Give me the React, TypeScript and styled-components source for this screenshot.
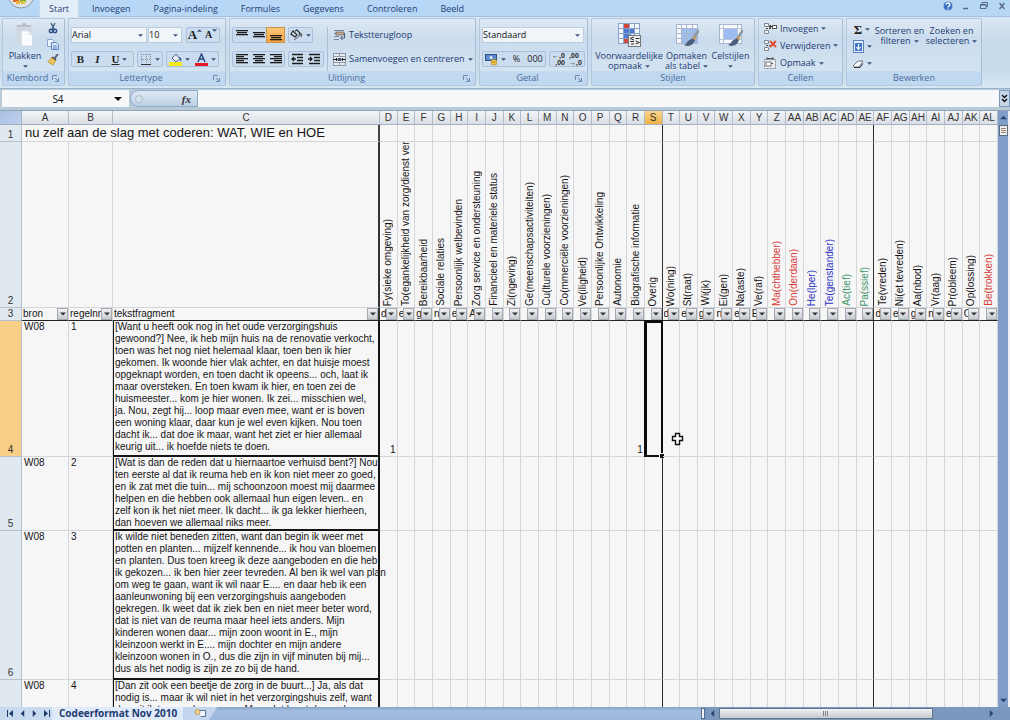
import React from "react";
import styled, { createGlobalStyle, css } from "styled-components";

const ui = '"Open Sans", "Noto Sans", sans-serif';
const cellFont = '"Liberation Sans", Arial, sans-serif';

const Global = createGlobalStyle`
  * { box-sizing: border-box; }
  html, body { margin: 0; height: 100%; }
  body { background: #f6f6f7; overflow: hidden; }
  button, input, select { font: inherit; color: inherit; margin: 0; padding: 0; border: 0; background: none; border-radius: 0; }
`;

const Window = styled.div`
  height: 100vh;
  display: flex;
  flex-direction: column;
  font-family: ${ui};
  font-size: 9px;
  line-height: 12px;
  color: #1e3c72;
  background: #bcd0e2;
`;

/* ---------- tab strip ---------- */
const TabStrip = styled.header`
  flex: none;
  height: 17px;
  display: flex;
  background: #b7d7f7;
  border-bottom: 1px solid #a5c0dc;
`;
const Orb = styled.button`
  flex: none;
  width: 39px;
  height: 16px;
  overflow: hidden;
  display: flex;
  justify-content: center;
`;
const Tabs = styled.nav`
  display: flex;
  flex: 1;
`;
const Tab = styled.button<{ $active?: boolean }>`
  height: 17px;
  padding: 0 12px 0 11px;
  line-height: 16px;
  ${(p) =>
    p.$active &&
    css`
      padding: 0 9px;
      margin-right: 2px;
      background: #e3edf8;
      border: 1px solid #c6d8ec;
      border-bottom: 0;
      border-top: 0;
    `}
`;
const WindowButtons = styled.div`
  display: flex;
  align-items: center;
  gap: 4px;
  padding: 0 1px 4px 0;
`;
const WinButton = styled.button`
  width: 14px;
  height: 12px;
  display: flex;
  align-items: center;
  justify-content: center;
`;

/* ---------- ribbon ---------- */
const Ribbon = styled.section`
  flex: none;
  height: 72px;
  display: flex;
  gap: 3px;
  padding: 1px 2px 2px;
  background: linear-gradient(#d9e6f3, #cadcec 30%, #c8dbec 75%, #d7e8f3);
  border-bottom: 1px solid #9bb3c8;
`;
const GroupBox = styled.section<{ $w: number }>`
  flex: none;
  width: ${(p) => p.$w}px;
  display: flex;
  flex-direction: column;
  border: 1px solid #b3c9e0;
  border-right-color: #a9bfd7;
  border-radius: 2px;
  background: linear-gradient(#dde8f3, #d0dfee 24%, #c9dbed 26%, #d3e3f1 78%, #c0d8f0 80%);
`;
const GroupBody = styled.div<{ $top: number }>`
  flex: 1;
  min-height: 0;
  display: flex;
  padding: ${(p) => p.$top}px 2px 0;
`;
const GroupFoot = styled.footer`
  height: 14px;
  display: flex;
  align-items: center;
  color: #4a6c9b;
  span { flex: 1; text-align: center; line-height: 14px; }
`;
const Launcher = styled.button`
  width: 12px;
  height: 12px;
  display: flex;
  align-items: center;
`;
const Stack = styled.div<{ $gap: number; $pad?: number }>`
  display: flex;
  flex-direction: column;
  gap: ${(p) => p.$gap}px;
  padding-left: ${(p) => p.$pad ?? 0}px;
`;
const Line = styled.div<{ $gap?: number }>`
  display: flex;
  height: 16px;
  gap: ${(p) => p.$gap ?? 3}px;
`;
const Cluster = styled.div`
  display: flex;
  border: 1px solid #a9bfdc;
  border-radius: 2px;
  background: #cbdcee;
`;
const Tool = styled.button<{ $w?: number; $on?: boolean }>`
  width: ${(p) => p.$w ?? 17}px;
  display: flex;
  align-items: center;
  justify-content: center;
  gap: 3px;
  color: #222;
  ${(p) => p.$on && css`background: linear-gradient(#fbc778, #f6a63c); outline: 1px solid #c9944a;`}
`;
const SizeTool = styled(Tool)`
  align-items: flex-start;
  gap: 0;
`;
const Glyph = styled.span<{ $size?: number; $style?: string }>`
  font-family: "Liberation Serif", serif;
  font-weight: bold;
  font-size: ${(p) => p.$size ?? 11}px;
  line-height: 14px;
  font-style: ${(p) => (p.$style === "italic" ? "italic" : "normal")};
  text-decoration: ${(p) => (p.$style === "underline" ? "underline" : "none")};
`;
const Plain = styled.span`
  color: #222;
  line-height: 14px;
`;
const ComboBox = styled.label<{ $w: number }>`
  width: ${(p) => p.$w}px;
  display: grid;
  align-items: center;
  background: #f0f5fa;
  border: 1px solid #bccde2;
  color: #111;
  select { grid-area: 1 / 1; appearance: none; width: 100%; height: 14px; line-height: 14px; outline: 0; }
  svg { grid-area: 1 / 1; justify-self: end; margin-right: 3px; pointer-events: none; }
`;
const TextTool = styled.button`
  height: 16px;
  display: flex;
  align-items: center;
  gap: 3px;
  white-space: nowrap;
`;
const BigTool = styled.button<{ $w: number }>`
  width: ${(p) => p.$w}px;
  display: flex;
  flex-direction: column;
  align-items: center;
  line-height: 10px;
  white-space: nowrap;
  svg.icon { margin-bottom: 4px; }
  span { display: flex; align-items: center; gap: 3px; min-height: 10px; }
`;
const Divider = styled.i`
  width: 1px;
  height: 44px;
  margin-left: 3px;
  background: #a9c0da;
`;

/* ---------- formula bar ---------- */
const FormulaBar = styled.section`
  flex: none;
  height: 22px;
  display: flex;
  padding: 1px 0 3px 2px;
  background: #b8cad8;
  border-bottom: 1px solid #8fa4b5;
`;
const NameBox = styled.div`
  width: 127px;
  display: flex;
  align-items: center;
  background: #f7f8f9;
  color: #111;
  font-size: 10px;
  input { width: 112px; text-align: center; outline: 0; }
`;
const FxPill = styled.div`
  width: 68px;
  margin-left: 1px;
  display: flex;
  align-items: center;
  justify-content: space-between;
  padding: 0 6px 0 4px;
  border: 1px solid #8ea9c8;
  border-radius: 9px 0 0 9px;
  background: linear-gradient(#dfe9f3, #bccfe4);
  i { width: 8px; height: 8px; border-radius: 4px; border: 1px solid #a9bccf; background: #d8e2ec; }
  button { font: italic bold 11px/14px "Liberation Serif", serif; color: #333; }
`;
const FormulaInput = styled.input`
  flex: 1;
  min-width: 0;
  background: #f7f8f9 !important;
  outline: 0;
`;
const Expand = styled.button`
  width: 11px;
  background: #c5d6e8 !important;
  border: 1px solid #7d98b8 !important;
  display: flex;
  align-items: center;
  justify-content: center;
`;

/* ---------- sheet ---------- */
const SheetArea = styled.main`
  flex: 1;
  min-height: 0;
  display: flex;
  position: relative;
  background: #f6f6f7;
`;
const SheetClip = styled.div`
  flex: 1;
  min-width: 0;
  overflow: hidden;
`;
const Sheet = styled.table`
  width: 100%;
  table-layout: fixed;
  border-collapse: separate;
  border-spacing: 0;
  font-family: ${cellFont};
  font-size: 10px;
  line-height: 12px;
  color: #151515;
  background: #f6f6f7;
  th, td { padding: 0; font-weight: normal; }
`;
const Row = styled.tr<{ $h: number }>`
  height: ${(p) => p.$h}px;
`;
const ColHead = styled.th<{ $on?: boolean; $dark?: boolean }>`
  height: 14px;
  text-align: center;
  white-space: nowrap;
  color: #333;
  background: ${(p) => (p.$on ? "linear-gradient(#fbd58c, #f0b145)" : "linear-gradient(#f3f5f7, #d9dfe6)")};
  border-right: 1px solid #b1bcc8;
  border-bottom: 1px solid #a3b0bf;
`;
const Corner = styled.th`
  background: linear-gradient(135deg, #a9c1e4, #bdd0ec);
  border-right: 1px solid #9fb4cd;
  border-bottom: 1px solid #a3b0bf;
`;
const RowHead = styled.th<{ $on?: boolean }>`
  vertical-align: bottom;
  text-align: center;
  color: #333;
  background: ${(p) => (p.$on ? "#f7cf86" : "#e0e8f0")};
  border-right: 1px solid #b4c2d0;
  border-bottom: 1px solid #b4c2d0;
`;
const Cell = styled.td<{ $dark?: boolean; $align?: string }>`
  position: relative;
  vertical-align: ${(p) => (p.$align === "right" ? "bottom" : "top")};
  text-align: ${(p) => p.$align ?? "left"};
  border-right: 1px solid ${(p) => (p.$dark ? "#2a2a2a" : "#d4d6d9")};
  border-bottom: 1px solid #d4d6d9;
  && { padding-left: ${(p) => (p.$align ? 0 : 2)}px; padding-right: ${(p) => (p.$align === "right" ? 1 : 0)}px; }
`;
const Fragment = styled.td`
  vertical-align: top;
  white-space: pre;
  border: solid #151515;
  border-width: 0 2px 2px 1px;
  && { padding-left: 1px; }
`;
const Title = styled.td`
  font-size: 13px;
  line-height: 16px;
  white-space: nowrap;
  border-right: 2px solid #444;
  border-bottom: 1px solid #d4d6d9;
  && { padding-left: 3px; }
`;
const VHead = styled.th<{ $dark?: boolean; $wide?: boolean }>`
  vertical-align: bottom;
  border-right: ${(p) => (p.$wide ? 2 : 1)}px solid ${(p) => (p.$dark ? "#333" : "#d4d6d9")};
  border-bottom: 1px solid #d4d6d9;
`;
const VText = styled.span<{ $c?: string }>`
  display: block;
  margin: 0 auto 1px;
  width: 12px;
  max-height: 164px;
  overflow: hidden;
  white-space: nowrap;
  writing-mode: vertical-rl;
  transform: rotate(180deg);
  color: ${(p) => p.$c ?? "inherit"};
`;
const FilterCell = styled.th<{ $dark?: boolean; $wide?: boolean }>`
  border-right: ${(p) => (p.$wide ? 2 : 1)}px solid ${(p) => (p.$dark ? "#333" : "#d4d6d9")};
  border-bottom: 1px solid #222;
  div { display: flex; height: 12px; padding-left: 1px; overflow: hidden; }
  span { flex: 1; min-width: 0; overflow: hidden; text-align: left; white-space: nowrap; }
`;
const FilterButton = styled.button`
  flex: none;
  width: 11px;
  height: 12px;
  border: 1px solid #a5a9b0 !important;
  background: linear-gradient(#f0f1f3, #c6cad1) !important;
  display: flex;
  align-items: center;
  justify-content: center;
`;
const Selection = styled.i`
  position: absolute;
  inset: -1px -1px -1px -1px;
  border: 2px solid #0c0c0c;
  border-left-width: 3px;
  border-top-width: 3px;
  &::after {
    content: "";
    position: absolute;
    right: -3px;
    bottom: -3px;
    width: 4px;
    height: 4px;
    background: #111;
    outline: 1px solid #f6f6f7;
  }
`;
const Cursor = styled.svg`
  position: absolute;
  left: 671px;
  top: 321px;
`;
const VScroll = styled.aside`
  flex: none;
  width: 12px;
  display: flex;
  flex-direction: column;
  align-items: stretch;
  padding-left: 1px;
  border-right: 2px solid #eef0f4;
  background: #7f9dc6;
  button { height: 13px; display: flex; align-items: center; justify-content: center; }
`;
const VThumb = styled.i`
  height: 11px;
  margin-top: 1px;
  border: 1px solid #5d6b80;
  background: #eceef0;
  display: flex;
  align-items: center;
  justify-content: center;
`;
const Spring = styled.i`
  flex: 1;
`;

/* ---------- bottom bar ---------- */
const Bottom = styled.footer`
  flex: none;
  height: 13px;
  display: flex;
  background: linear-gradient(#86a3c8, #a3bde0 30%, #9cb8dd);
`;
const SheetNav = styled.div`
  width: 52px;
  display: flex;
  padding-left: 4px;
  background: #c8daee;
  button { width: 12px; display: flex; align-items: center; justify-content: center; }
`;
const SheetTab = styled.button`
  padding: 0 6px 0 7px !important;
  background: #dfeafb !important;
  font-size: 10px !important;
  font-weight: bold !important;
  line-height: 13px !important;
  color: #1d3a6e !important;
`;
const NewSheet = styled.button`
  width: 34px;
  background: #c4d6ee !important;
  clip-path: polygon(0 0, 100% 0, 76% 100%, 0 100%);
  display: flex;
  align-items: center;
  justify-content: center;
`;
const HScroll = styled.div`
  width: 309px;
  display: flex;
  background: #7b98bf;
  padding-right: 12px;
  button { width: 14px; display: flex; align-items: center; justify-content: center; }
`;
const Splitter = styled.i`
  width: 4px;
  margin: 1px 0;
  border: 1px solid #566d8d;
  background: #f0f2f5;
`;
const HThumb = styled.i`
  flex: none;
  width: 214px;
  margin: 1px 0;
  border: 1px solid #66758b;
  background: linear-gradient(#f1f3f5, #c3c8cf);
  display: flex;
  align-items: center;
  justify-content: center;
`;

/* ---------- drawings ---------- */
const Tri = ({ d = "down", s = 5, c = "#3c5680" }: { d?: string; s?: number; c?: string }) => {
  const p: Record<string, string> = { down: "0,2 8,2 4,6", up: "0,6 8,6 4,2", left: "6,0 6,8 2,4", right: "2,0 2,8 6,4" };
  return (
    <svg width={s} height={s} viewBox="0 0 8 8" aria-hidden="true"><polygon points={p[d]} fill={c} /></svg>
  );
};

const Svg = ({ w, h = w, vb, big, children }: { w: number; h?: number; vb?: string; big?: boolean; children: React.ReactNode }) => (
  <svg className={big ? "icon" : undefined} width={w} height={h} viewBox={vb ?? `0 0 ${w} ${h}`} fill="none" aria-hidden="true">{children}</svg>
);

const Bars = ({ rows }: { rows: [number, number, number][] }) => (
  <Svg w={12} h={12}>
    {rows.map(([x, y, w]) => <rect key={y} x={x} y={y} width={w} height="1" fill="#1c1c1c" />)}
    {rows.map(([x, y, w]) => <rect key={y + 20} x={x} y={y + 1} width={w} height="1" fill="#1c1c1c" opacity=".3" />)}
  </Svg>
);

const Brush = () => (
  <>
    <path d="M24 7L18 16" stroke="#8d98a8" strokeWidth="2.8" />
    <path d="M18 15l-5 3c-1 2-2 3-4 4 4 2 9 1 11-5z" fill="#4d5f7c" />
    <path d="M19 13l2.500 2-1.500 2-3-2z" fill="#c99a5c" />
  </>
);

const IconPaste = () => (
  <Svg w={20} h={26} big>
    <path d="M1 3h16v19H1z" fill="#d0d9e3" />
    <path d="M2 3h5c0-3 4-3 4 0h5v2H2z" fill="#b4bdc8" />
    <path d="M6 9h8l4 4v12H6z" fill="#fafbfd" stroke="#cfd8e3" />
    <path d="M14 9v4h4" stroke="#cfd8e3" />
  </Svg>
);
const IconCut = () => (
  <Svg w={12} h={12}>
    <path d="M4 1l3 6M8 1L5 7" stroke="#47628c" strokeWidth="1.4" />
    <circle cx="4" cy="9" r="1.7" stroke="#2c4f88" strokeWidth="1.5" />
    <circle cx="8" cy="9" r="1.7" stroke="#2c4f88" strokeWidth="1.5" />
  </Svg>
);
const IconCopy = () => (
  <Svg w={12} h={12}>
    <path d="M.5 1.500h5l2 2v5h-7z" fill="#eaf2fc" stroke="#86a3cc" />
    <path d="M4.500 4.500h5l2 2v5h-7z" fill="#d7e7fb" stroke="#5c83bd" />
    <path d="M6 8h4M6 10h4" stroke="#5c83bd" />
  </Svg>
);
const IconPainter = () => (
  <Svg w={12} h={12}>
    <path d="M11 0L7 5" stroke="#55637a" strokeWidth="2" />
    <path d="M5 3l4 3-3 5-5-3z" fill="#eac35a" stroke="#b58a2a" strokeWidth=".7" />
    <path d="M5 3l4 3" stroke="#444" strokeWidth="1.4" />
  </Svg>
);
const IconLauncher = () => (
  <Svg w={7} h={7}><path d="M.5 5V.5H5M3 3l3 3M6.500 3v3.500H3" stroke="#6d89b0" /></Svg>
);
const IconBorders = () => (
  <Svg w={12} h={12}>
    <path d="M1 1.500h10M1 6.500h10M1.500 1v10M6.500 1v10M10.500 1v10" stroke="#8796ab" strokeDasharray="1 1" />
    <path d="M1 11.500h10" stroke="#333" />
  </Svg>
);
const IconFill = () => (
  <Svg w={13} h={13}>
    <path d="M3 5l4-4 4 5-4 3z" fill="#e8edf5" stroke="#4e6285" />
    <path d="M10 4c2 0 3 2 2 5-1-1-1-3-2-5z" fill="#3565b5" />
    <rect x="0" y="9" width="13" height="4" fill="#f4ea1c" />
  </Svg>
);
const IconWrap = () => (
  <Svg w={13} h={13}>
    <path d="M1 1.500h10M1 4.500h9M1 7.500h5M1 10.500h5" stroke="#7b8594" />
    <path d="M3 3h8v3H3z" fill="#c6a68c" stroke="#555" strokeWidth=".6" />
    <path d="M11.500 4v5H8M9.500 7L7.500 9l2 2" stroke="#4a5a73" />
  </Svg>
);
const IconMerge = () => (
  <Svg w={13} h={13}>
    <rect x=".5" y=".5" width="12" height="12" fill="#e7ebf0" stroke="#8d98a8" />
    <path d="M0 3.500h13M0 9.500h13M6.500 0v3M6.500 10v3" stroke="#8d98a8" />
    <path d="M0 6.500h4M9 6.500h4M3 5l1.500 1.500L3 8M10 5L8.500 6.500 10 8" stroke="#222" />
    <rect x="5" y="5" width="3" height="3" fill="#46566e" />
  </Svg>
);
const IconOrient = () => (
  <Svg w={13} h={12}>
    <path d="M4 11L12 5M12 5H9M12 5l-1 3" stroke="#5b5b5b" />
    <path d="M1 5l2-3 4 4-2 2zM5 2l2-1 3 3-1 2" stroke="#2a2a2a" strokeWidth="1.200" />
  </Svg>
);
const IconIndent = ({ out }: { out?: boolean }) => (
  <Svg w={13} h={12}>
    <path d="M1 1.500h11M6 4.500h6M6 7.500h6M1 10.500h11" stroke="#1c1c1c" strokeWidth="1.400" />
    <path d={out ? "M5 6H1M3 4L1 6l2 2" : "M0 6h4M2 4l2 2-2 2"} stroke="#1c1c1c" strokeWidth="1.300" />
  </Svg>
);
const IconMoney = () => (
  <Svg w={13} h={13}>
    <rect x=".5" y="1.500" width="11" height="6" fill="#5f8acb" stroke="#2f528c" />
    <circle cx="6" cy="4.500" r="1.500" fill="#dce8f8" />
    <ellipse cx="9" cy="8" rx="3" ry="1.500" fill="#ecc34d" stroke="#a97f22" strokeWidth=".6" />
    <ellipse cx="9" cy="10.500" rx="3" ry="1.500" fill="#ecc34d" stroke="#a97f22" strokeWidth=".6" />
  </Svg>
);
const DecText = styled.span<{ $right?: boolean }>`
  font: bold 7px/7px ${cellFont};
  text-align: ${(p) => (p.$right ? "left" : "right")};
  white-space: pre;
`;
const IconCond = () => (
  <Svg w={24} h={24} big>
    <rect x="1" y="1" width="21" height="19" fill="#f3f6fa" />
    <rect x="6" y="1" width="6" height="4" fill="#d2463a" />
    <rect x="6" y="5" width="11" height="5" fill="#4b7bd0" />
    <rect x="6" y="10" width="8" height="5" fill="#4b7bd0" />
    <rect x="6" y="15" width="5" height="5" fill="#d2463a" />
    <path d="M1 .5h21M1 5.500h21M1 10.500h21M1 15.500h21M1 20.500h14M1.500 0v20M6.500 0v20M12.500 0v20M17.500 0v20M22.500 0v20" stroke="#8aa3c8" />
    <rect x="11.500" y="12.500" width="12" height="11" fill="#f0f0f0" stroke="#777" />
    <path d="M17 14l-4 1.500 4 1.500M13 18.500h4M18.500 15.500h4M18.500 18l4 1.500-4 1.500M17 21h-3" stroke="#333" />
  </Svg>
);
const IconTable = () => (
  <Svg w={24} h={24} big>
    <rect x="1" y="1" width="22" height="19" fill="#f7f9fc" />
    <rect x="6" y="6" width="17" height="14" fill="#9dbdec" />
    <path d="M1 1.500h22M1 5.500h22M1 10.500h22M1 15.500h22M1 20.500h22M1.500 1v20M6.500 1v20M11.500 1v20M17.500 1v20M22.500 1v20" stroke="#a7b6cc" />
    <Brush />
  </Svg>
);
const IconStyles = () => (
  <Svg w={24} h={24} big>
    <rect x=".5" y="1.500" width="22" height="19" fill="#f7f9fc" stroke="#a7b6cc" />
    <path d="M1 5.500h21M1 16.500h21M4.500 2v18M18.500 2v18" stroke="#b9c5d7" />
    <rect x="5" y="6" width="13" height="10" fill="#9dbdf2" />
    <Brush />
  </Svg>
);
const IconCells = ({ kind }: { kind: "in" | "del" | "fmt" }) => (
  <Svg w={14} h={13}>
    {kind === "fmt" ? (
      <>
        <rect x="1.500" y="2.500" width="11" height="9" fill="#e9edf2" stroke="#7e8795" strokeDasharray="2 1" />
        <path d="M4 0v3M10 0v3M4 1.500h6M4 6.500h6" stroke="#555" />
        <rect x="3" y="5" width="5" height="4" fill="#fff" stroke="#777" />
      </>
    ) : (
      <>
        <path d="M1.500 1.500h4v3h-4zM1.500 8.500h4v3h-4z" fill="#f4f5f7" stroke="#7e8795" />
        <path d="M3 6.500h5" stroke="#444" strokeDasharray="2 1" />
        {kind === "in" ? (
          <>
            <path d="M6 4.500h3M8 3L6 4.500 8 6" stroke="#333" />
            <rect x="9.500" y="3.500" width="4" height="3" fill="#fff" stroke="#555" />
          </>
        ) : (
          <path d="M7 2l6 6M13 2L7 8" stroke="#dd4f38" strokeWidth="2" />
        )}
      </>
    )}
  </Svg>
);
const IconDown = () => (
  <Svg w={11} h={13}>
    <rect x=".5" y=".5" width="10" height="12" fill="#e6effb" stroke="#5b80bb" />
    <rect x="2" y="3" width="7" height="8" fill="#3f76d0" />
    <path d="M5.500 4v5M3.500 7l2 2.500 2-2.500" stroke="#fff" strokeWidth="1.200" />
  </Svg>
);
const IconEraser = () => (
  <Svg w={12} h={10}>
    <path d="M1 7l5-5h5L7 8H2z" fill="#fafafa" stroke="#6e7684" />
    <path d="M2 8.500h6l3-4" stroke="#333" />
  </Svg>
);
const IconSort = () => (
  <Svg w={24} h={24} big>
    <path d="M8 3h16l-6 8v10l-4-3v-8z" fill="#8a8785" />
    <path d="M10 4h12l-6 6v9" stroke="#c9ced5" strokeWidth="1" />
    <path d="M1.500 11L5 1.500 8.500 11M3 8h4" stroke="#3d6396" strokeWidth="2" />
    <path d="M2 13.500h6L2 21.500h7" stroke="#b04a38" strokeWidth="2" />
  </Svg>
);
const IconFind = () => (
  <Svg w={24} h={24} big>
    <path d="M6 2h4l1 5v14H1v-6l4-8z" fill="#546a8e" />
    <path d="M18 2h-4l-1 5v14h10v-6l-4-8z" fill="#546a8e" />
    <rect x="10" y="8" width="4" height="5" fill="#3c4f70" />
    <path d="M7 3v5l-3 7v5M16 3v5l1 7v5" stroke="#c3d1e6" strokeWidth="1.800" />
    <path d="M1 15.500h10M13 15.500h10M5 6.500h6M13 6.500h6" stroke="#34476a" />
  </Svg>
);

/* ---------- data ---------- */
const tabs = ["Start", "Invoegen", "Pagina-indeling", "Formules", "Gegevens", "Controleren", "Beeld"];

type Col = { id: string; label: string; tag?: string; color?: string; dark?: boolean };
const red = "#d93a36";
const blue = "#2e35c0";
const green = "#3f9566";
const cols: Col[] = [
  { id: "D", label: "Fy(sieke omgeving)", tag: "d" },
  { id: "E", label: "To(egankelijkheid van zorg/dienst verlening)", tag: "e" },
  { id: "F", label: "Bereikbaarheid", tag: "g" },
  { id: "G", label: "Sociale relaties", tag: "n" },
  { id: "H", label: "Persoonlijk welbevinden", tag: "et" },
  { id: "I", label: "Zorg service en ondersteuning", tag: "AT" },
  { id: "J", label: "Financieel en materiele status" },
  { id: "K", label: "Zi(ngeving)" },
  { id: "L", label: "Ge(meenschapsactiviteiten)" },
  { id: "M", label: "Cu(lturele voorzieningen)" },
  { id: "N", label: "Co(mmerciële voorzieningen)" },
  { id: "O", label: "Ve(iligheid)" },
  { id: "P", label: "Persoonlijke Ontwikkeling" },
  { id: "Q", label: "Autonomie" },
  { id: "R", label: "Biografische informatie" },
  { id: "S", label: "Overig", dark: true },
  { id: "T", label: "Wo(ning)", tag: "d" },
  { id: "U", label: "St(raat)", tag: "e" },
  { id: "V", label: "Wi(jk)", tag: "g" },
  { id: "W", label: "Ei(gen)", tag: "n" },
  { id: "X", label: "Na(aste)", tag: "et" },
  { id: "Y", label: "Ve(raf)", tag: "E" },
  { id: "Z", label: "Ma(chthebber)", color: red },
  { id: "AA", label: "On(derdaan)", color: red },
  { id: "AB", label: "He(lper)", color: blue },
  { id: "AC", label: "Te(genstander)", color: blue },
  { id: "AD", label: "Ac(tief)", color: green },
  { id: "AE", label: "Pa(ssief)", color: green, dark: true },
  { id: "AF", label: "Te(vreden)", tag: "d" },
  { id: "AG", label: "Ni(et tevreden)", tag: "e" },
  { id: "AH", label: "Aa(nbod)", tag: "g" },
  { id: "AI", label: "Vr(aag)", tag: "n" },
  { id: "AJ", label: "Pr(obleem)", tag: "et" },
  { id: "AK", label: "Op(lossing)", tag: "OE" },
  { id: "AL", label: "Be(trokken)", color: red },
];

const rows = [
  {
    n: 4, h: 136, nr: "1", marks: ["D", "R"],
    text: `[Want u heeft ook nog in het oude verzorgingshuis
gewoond?] Nee, ik heb mijn huis na de renovatie verkocht,
toen was het nog niet helemaal klaar, toen ben ik hier
gekomen. Ik woonde hier vlak achter, en dat huisje moest
opgeknapt worden, en toen dacht ik opeens... och, laat ik
maar oversteken. En toen kwam ik hier, en toen zei de
huismeester... kom je hier wonen. Ik zei... misschien wel,
ja. Nou, zegt hij... loop maar even mee, want er is boven
een woning klaar, daar kun je wel even kijken. Nou toen
dacht ik... dat doe ik maar, want het ziet er hier allemaal
keurig uit... ik hoefde niets te doen.`,
  },
  {
    n: 5, h: 74, nr: "2", marks: [],
    text: `[Wat is dan de reden dat u hiernaartoe verhuisd bent?] Nou,
ten eerste al dat ik reuma heb en ik kon niet meer zo goed,
en ik zat met die tuin... mij schoonzoon moest mij daarmee
helpen en die hebben ook allemaal hun eigen leven.. en
zelf kon ik het niet meer. Ik dacht... ik ga lekker hierheen,
dan hoeven we allemaal niks meer.`,
  },
  {
    n: 6, h: 149, nr: "3", marks: [],
    text: `Ik wilde niet beneden zitten, want dan begin ik weer met
potten en planten... mijzelf kennende... ik hou van bloemen
en planten. Dus toen kreeg ik deze aangeboden en die heb
ik gekozen... ik ben hier zeer tevreden. Al ben ik wel van plan
om weg te gaan, want ik wil naar E.... en daar heb ik een
aanleunwoning bij een verzorgingshuis aangeboden
gekregen. Ik weet dat ik ziek ben en niet meer beter word,
dat is niet van de reuma maar heel iets anders. Mijn
kinderen wonen daar... mijn zoon woont in E., mijn
kleinzoon werkt in E.... mijn dochter en mijn andere
kleinzoon wonen in O., dus die zijn in vijf minuten bij mij...
dus als het nodig is zijn ze zo bij de hand.`,
  },
  {
    n: 7, h: 60, nr: "4", marks: [],
    text: `[Dan zit ook een beetje de zorg in de buurt...] Ja, als dat
nodig is... maar ik wil niet in het verzorgingshuis zelf, want
dan zit ik tussen de mensen. Maar dat komt dan wel`,
  },
];

const Combo = ({ w, label, value }: { w: number; label: string; value: string }) => (
  <ComboBox $w={w}>
    <select aria-label={label} defaultValue={value}><option>{value}</option></select>
    <Tri />
  </ComboBox>
);

const Group = ({ w, title, top = 8, launch, children }: { w: number; title: string; top?: number; launch?: boolean; children: React.ReactNode }) => (
  <GroupBox $w={w} aria-label={title}>
    <GroupBody $top={top}>{children}</GroupBody>
    <GroupFoot>
      <span>{title}</span>
      {launch && <Launcher aria-label={`${title} opties`}><IconLauncher /></Launcher>}
    </GroupFoot>
  </GroupBox>
);

const Filter = ({ label }: { label: string }) => (
  <FilterButton aria-label={`Filter ${label}`}><Tri s={6} c="#333" /></FilterButton>
);

export default function App() {
  return (
    <Window>
      <Global />
      <TabStrip>
        <Orb aria-label="Office-knop">
          <Svg w={28} h={11}>
            <circle cx="15" cy="-5" r="13" fill="#dfe3e8" stroke="#8b97a8" />
            <path d="M7 0h6v2H7z" fill="#dd6a2a" />
            <path d="M14 0h6v2h-6z" fill="#7cab3a" />
            <path d="M10 1h4v3h-4z" fill="#f0b52e" />
            <path d="M15 1h4v3h-4z" fill="#e9c23c" />
          </Svg>
        </Orb>
        <Tabs>{tabs.map((t, i) => <Tab key={t} $active={i === 0}>{t}</Tab>)}</Tabs>
        <WindowButtons>
          <WinButton aria-label="Help">
            <Svg w={12} h={12}>
              <circle cx="6" cy="6" r="5" fill="#3f73c8" stroke="#c8d8ee" />
              <path d="M4 4.500c0-2 4-2 4 0 0 1.500-2 1.200-2 3M6 8.500v1" stroke="#fff" strokeWidth="1.300" />
            </Svg>
          </WinButton>
          <WinButton aria-label="Minimaliseren"><Svg w={8} h={8}><path d="M1 6.500h5" stroke="#56687f" strokeWidth="1.500" /></Svg></WinButton>
          <WinButton aria-label="Herstellen"><Svg w={8} h={8}><path d="M2 2V.5h5.500v4H6M.5 2.500h5.500v4H.5zM.5 3h5.500" stroke="#56687f" /></Svg></WinButton>
          <WinButton aria-label="Sluiten"><Svg w={8} h={8}><path d="M1.500 1l5 6M6.500 1l-5 6" stroke="#56687f" strokeWidth="1.300" /></Svg></WinButton>
        </WindowButtons>
      </TabStrip>

      <Ribbon>
        <Group w={63} title="Klembord" top={3} launch>
          <BigTool $w={40}>
            <IconPaste />
            <span>Plakken</span>
            <span><Tri /></span>
          </BigTool>
          <Stack $gap={4} $pad={1}>
            <Tool $w={14} aria-label="Knippen"><IconCut /></Tool>
            <Tool $w={14} aria-label="Kopiëren"><IconCopy /></Tool>
            <Tool $w={14} aria-label="Opmaak kopiëren"><IconPainter /></Tool>
          </Stack>
        </Group>

        <Group w={158} title="Lettertype" launch>
          <Stack $gap={8}>
            <Line $gap={1}>
              <Combo w={76} label="Lettertype" value="Arial" />
              <Combo w={34} label="Tekengrootte" value="10" />
              <Stack $gap={0} $pad={3}>
                <Cluster>
                  <SizeTool $w={16} aria-label="Lettertype vergroten"><Glyph $size={13}>A</Glyph><Tri d="up" s={5} /></SizeTool>
                  <SizeTool $w={16} aria-label="Lettertype verkleinen"><Glyph $size={10}>A</Glyph><Tri s={5} /></SizeTool>
                </Cluster>
              </Stack>
            </Line>
            <Line>
              <Cluster>
                <Tool aria-label="Vet"><Glyph>B</Glyph></Tool>
                <Tool aria-label="Cursief"><Glyph $style="italic">I</Glyph></Tool>
                <Tool $w={27} aria-label="Onderstrepen"><Glyph $style="underline">U</Glyph><Tri /></Tool>
              </Cluster>
              <Cluster><Tool $w={24} aria-label="Randen"><IconBorders /><Tri /></Tool></Cluster>
              <Cluster>
                <Tool $w={25} aria-label="Opvulkleur"><IconFill /><Tri /></Tool>
                <Tool $w={26} aria-label="Tekstkleur">
                  <Svg w={13} h={13}><path d="M3 9L6.500 1 10 9M4.500 6h4" stroke="#2b4a86" strokeWidth="1.500" /><rect y="10" width="13" height="3" fill="#e01b22" /></Svg>
                  <Tri />
                </Tool>
              </Cluster>
            </Line>
          </Stack>
        </Group>

        <Group w={247} title="Uitlijning" launch>
          <Stack $gap={8}>
            <Line>
              <Cluster>
                <Tool aria-label="Boven uitlijnen"><Bars rows={[[0, 1, 12], [1, 3, 10], [0, 5, 12]]} /></Tool>
                <Tool aria-label="Centreren verticaal"><Bars rows={[[0, 3, 12], [1, 5, 10], [0, 7, 12]]} /></Tool>
                <Tool $on aria-label="Onder uitlijnen"><Bars rows={[[0, 6, 12], [1, 8, 10], [0, 10, 12]]} /></Tool>
              </Cluster>
              <Cluster><Tool $w={23} aria-label="Afdrukstand"><IconOrient /><Tri /></Tool></Cluster>
            </Line>
            <Line>
              <Cluster>
                <Tool aria-label="Links uitlijnen"><Bars rows={[[0, 1, 12], [0, 3, 8], [0, 5, 12], [0, 7, 8], [0, 9, 12]]} /></Tool>
                <Tool aria-label="Centreren"><Bars rows={[[0, 1, 12], [2, 3, 8], [0, 5, 12], [2, 7, 8], [0, 9, 12]]} /></Tool>
                <Tool aria-label="Rechts uitlijnen"><Bars rows={[[0, 1, 12], [4, 3, 8], [0, 5, 12], [4, 7, 8], [0, 9, 12]]} /></Tool>
              </Cluster>
              <Cluster>
                <Tool aria-label="Inspringing verkleinen"><IconIndent out /></Tool>
                <Tool aria-label="Inspringing vergroten"><IconIndent /></Tool>
              </Cluster>
            </Line>
          </Stack>
          <Divider />
          <Stack $gap={8} $pad={5}>
            <TextTool><IconWrap />Tekstterugloop</TextTool>
            <TextTool><IconMerge />Samenvoegen en centreren <Tri /></TextTool>
          </Stack>
        </Group>

        <Group w={109} title="Getal" launch>
          <Stack $gap={8}>
            <Line><Combo w={102} label="Getalnotatie" value="Standaard" /></Line>
            <Line>
              <Cluster>
                <Tool $w={25} aria-label="Valuta"><IconMoney /><Tri /></Tool>
                <Tool aria-label="Procent"><Plain>%</Plain></Tool>
                <Tool $w={20} aria-label="Duizendtallen"><Plain>000</Plain></Tool>
              </Cluster>
              <Cluster>
                <Tool aria-label="Meer decimalen"><DecText>{"←,0\n,00"}</DecText></Tool>
                <Tool aria-label="Minder decimalen"><DecText $right>{",00\n→,0"}</DecText></Tool>
              </Cluster>
            </Line>
          </Stack>
        </Group>

        <Group w={164} title="Stijlen" top={4}>
          <BigTool $w={70}><IconCond /><span>Voorwaardelijke</span><span>opmaak <Tri /></span></BigTool>
          <BigTool $w={45}><IconTable /><span>Opmaken</span><span>als tabel <Tri /></span></BigTool>
          <BigTool $w={43}><IconStyles /><span>Celstijlen</span><span><Tri /></span></BigTool>
        </Group>

        <Group w={85} title="Cellen" top={2}>
          <Stack $gap={2} $pad={2}>
            <TextTool><IconCells kind="in" />Invoegen <Tri /></TextTool>
            <TextTool><IconCells kind="del" />Verwijderen <Tri /></TextTool>
            <TextTool><IconCells kind="fmt" />Opmaak <Tri /></TextTool>
          </Stack>
        </Group>

        <Group w={136} title="Bewerken" top={3}>
          <Stack $gap={2} $pad={2}>
            <Line><Tool $w={22} aria-label="Som"><Glyph $size={13}>Σ</Glyph><Tri /></Tool></Line>
            <Line><Tool $w={22} aria-label="Doorvoeren"><IconDown /><Tri /></Tool></Line>
            <Line><Tool $w={22} aria-label="Wissen"><IconEraser /><Tri /></Tool></Line>
          </Stack>
          <Stack $gap={0} $pad={1}>
            <Line $gap={0}>
              <BigTool $w={51}><IconSort /><span>Sorteren en</span><span>filteren <Tri /></span></BigTool>
              <BigTool $w={53}><IconFind /><span>Zoeken en</span><span>selecteren <Tri /></span></BigTool>
            </Line>
          </Stack>
        </Group>
      </Ribbon>

      <FormulaBar>
        <NameBox>
          <input aria-label="Naamvak" defaultValue="S4" />
          <Tri s={8} c="#111" />
        </NameBox>
        <FxPill><i /><button>fx</button></FxPill>
        <FormulaInput aria-label="Formule" />
        <Expand aria-label="Formulebalk uitvouwen">
          <Svg w={7} h={9}><path d="M1 1l2.500 2.500L6 1M1 5l2.500 2.500L6 5" stroke="#111" strokeWidth="1.400" /></Svg>
        </Expand>
      </FormulaBar>

      <SheetArea>
        <SheetClip>
          <Sheet>
            <colgroup>
              <col style={{ width: 22 }} />
              <col style={{ width: 47 }} />
              <col style={{ width: 44 }} />
              <col style={{ width: 267 }} />
              {cols.map((c) => <col key={c.id} />)}
            </colgroup>
            <thead>
              <Row $h={14}>
                <Corner aria-label="Alles selecteren" />
                {["A", "B", "C"].map((c) => <ColHead key={c} scope="col">{c}</ColHead>)}
                {cols.map((c) => <ColHead key={c.id} scope="col" $on={c.id === "S"}>{c.id}</ColHead>)}
              </Row>
            </thead>
            <tbody>
              <Row $h={17}>
                <RowHead scope="row">1</RowHead>
                <Title colSpan={3}>nu zelf aan de slag met coderen: WAT, WIE en HOE</Title>
                {cols.map((c) => <Cell key={c.id} $dark={c.dark} />)}
              </Row>
              <Row $h={166}>
                <RowHead scope="row">2</RowHead>
                <Cell /><Cell /><VHead $dark $wide />
                {cols.map((c) => <VHead key={c.id} $dark={c.dark}><VText $c={c.color}>{c.label}</VText></VHead>)}
              </Row>
              <Row $h={13}>
                <RowHead scope="row">3</RowHead>
                {["bron", "regelnr", "tekstfragment"].map((t, i) => (
                  <FilterCell key={t} $dark={i === 2} $wide={i === 2}><div><span>{t}</span><Filter label={t} /></div></FilterCell>
                ))}
                {cols.map((c) => (
                  <FilterCell key={c.id} $dark={c.dark}><div><span>{c.tag}</span><Filter label={c.label} /></div></FilterCell>
                ))}
              </Row>
              {rows.map((r) => (
                <Row key={r.n} $h={r.h}>
                  <RowHead scope="row" $on={r.n === 4}>{r.n}</RowHead>
                  <Cell>W08</Cell>
                  <Cell>{r.nr}</Cell>
                  <Fragment>{r.text}</Fragment>
                  {cols.map((c) => (
                    <Cell key={c.id} $dark={c.dark} $align="right">
                      {r.marks.includes(c.id) ? "1" : null}
                      {r.n === 4 && c.id === "S" ? <Selection /> : null}
                    </Cell>
                  ))}
                </Row>
              ))}
            </tbody>
          </Sheet>
        </SheetClip>
        <VScroll>
          <button aria-label="Omhoog"><Tri d="up" s={7} c="#2c4570" /></button>
          <VThumb><Svg w={5} h={5}><path d="M0 .5h5M0 2.500h5M0 4.500h5" stroke="#9a7f70" /></Svg></VThumb>
          <Spring />
          <button aria-label="Omlaag"><Tri s={7} c="#2c4570" /></button>
        </VScroll>
        <Cursor width="13" height="14" viewBox="0 0 13 14" aria-hidden="true">
          <path d="M4.500 1.500h4v3h3v4h-3v4h-4v-4h-3v-4h3z" fill="#fff" stroke="#111" strokeWidth="1.400" />
        </Cursor>
      </SheetArea>

      <Bottom>
        <SheetNav>
          <button aria-label="Eerste blad"><Svg w={7} h={7}><path d="M.5 0v7" stroke="#1f3c70" /><path d="M6 0v7L2 3.500z" fill="#1f3c70" /></Svg></button>
          <button aria-label="Vorig blad"><Tri d="left" s={7} c="#1f3c70" /></button>
          <button aria-label="Volgend blad"><Tri d="right" s={7} c="#1f3c70" /></button>
          <button aria-label="Laatste blad"><Svg w={7} h={7}><path d="M6.500 0v7" stroke="#1f3c70" /><path d="M1 0v7l4-3.500z" fill="#1f3c70" /></Svg></button>
        </SheetNav>
        <SheetTab>Codeerformat Nov 2010</SheetTab>
        <NewSheet aria-label="Blad invoegen">
          <Svg w={13} h={11}>
            <path d="M4.500 2.500h7v6h-5" fill="#eef4fc" stroke="#5b7299" />
            <circle cx="3.500" cy="4" r="2.500" fill="#f3d695" stroke="#b88a3c" strokeWidth=".8" />
          </Svg>
        </NewSheet>
        <Spring />
        <HScroll>
          <Splitter />
          <button aria-label="Naar links"><Tri d="left" s={7} c="#2c4570" /></button>
          <HThumb><Svg w={6} h={5}><path d="M.5 0v5M2.500 0v5M4.500 0v5" stroke="#7d858f" /></Svg></HThumb>
          <Spring />
          <button aria-label="Naar rechts"><Tri d="right" s={7} c="#2c4570" /></button>
        </HScroll>
      </Bottom>
    </Window>
  );
}
